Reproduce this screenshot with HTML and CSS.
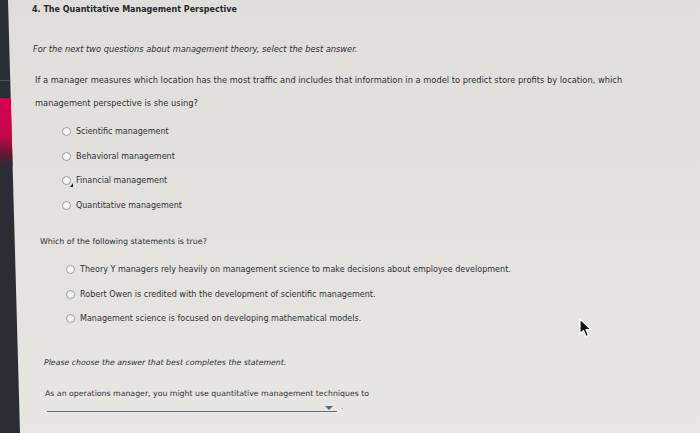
FILE: index.html
```html
<!DOCTYPE html>
<html lang="en">
<head>
    <meta charset="UTF-8">
    <title>The Quantitative Management Perspective</title>
    <link rel="stylesheet" href="styles.css">
</head>
<body>
    <div class="screen">
        <div class="side-bar">
            <div class="side-line"></div>
            <div class="side-pink"></div>
        </div>

        <div class="content">
            <h1 class="title">4. The Quantitative Management Perspective</h1>

            <p class="note note-1">For the next two questions about management theory, select the best answer.</p>

            <p class="question q-1">If a manager measures which location has the most traffic and includes that information in a model to predict store profits by location, which management perspective is she using?</p>

            <div class="options opts-1">
                <label class="option"><span class="radio"></span>Scientific management</label>
                <label class="option"><span class="radio"></span>Behavioral management</label>
                <label class="option"><span class="radio"><span class="pointer-mark"></span></span>Financial management</label>
                <label class="option"><span class="radio"></span>Quantitative management</label>
            </div>

            <p class="question q-2">Which of the following statements is true?</p>

            <div class="options opts-2">
                <label class="option"><span class="radio"></span>Theory Y managers rely heavily on management science to make decisions about employee development.</label>
                <label class="option"><span class="radio"></span>Robert Owen is credited with the development of scientific management.</label>
                <label class="option"><span class="radio"></span>Management science is focused on developing mathematical models.</label>
            </div>

            <p class="note note-2">Please choose the answer that best completes the statement.</p>

            <p class="question q-3">As an operations manager, you might use quantitative management techniques to</p>

            <div class="dropdown-row">
                <div class="dropdown">
                    <span class="caret"></span>
                </div>
                <span class="period">.</span>
            </div>
        </div>

        <!-- mouse pointer -->
        <svg class="cursor" width="14" height="20" viewBox="0 0 14 20">
            <path d="M1 1 L1 16 L4.5 12.5 L7 18.5 L9.5 17.5 L7 11.5 L12 11.5 Z" fill="#111" stroke="#fff" stroke-width="1.2" stroke-linejoin="round"/>
        </svg>
    </div>
</body>
</html>
```

FILE: styles.css
```css
html, body {
    margin: 0;
    padding: 0;
}
body {
    width: 700px;
    height: 433px;
    overflow: hidden;
    font-family: "DejaVu Sans", Verdana, sans-serif;
    color: #2e3034;
    background: linear-gradient(180deg, #dfdedb 0%, #e3e2df 55%, #e7e6e3 100%);
}
.screen {
    position: relative;
    display: flex;
    height: 433px;
}
.side-bar {
    position: relative;
    flex: 0 0 20px;
    height: 433px;
    background: #2a2e34;
    clip-path: polygon(0 0, 8px 0, 20px 100%, 0 100%);
}
.side-line {
    position: absolute;
    top: 80px;
    left: 0;
    width: 20px;
    height: 1px;
    background: #4a4f56;
}
.side-pink {
    position: absolute;
    top: 98px;
    left: 0;
    width: 20px;
    height: 68px;
    background: linear-gradient(180deg, #d4004c 0%, #c8084c 55%, #5a1a30 85%, #2a2e34 100%);
}
.content {
    flex: 1;
}
.title {
    margin: 3px 0 0 12px;
    font-size: 8px;
    line-height: 14px;
    font-weight: bold;
    color: #26282c;
}
p {
    margin: 0;
}
.note {
    font-style: italic;
    line-height: 14px;
}
.note-1 {
    margin: 25px 0 0 13px;
    font-size: 8.25px;
}
.q-1 {
    margin: 12.5px 0 0 15px;
    width: 600px;
    font-size: 8.3px;
    line-height: 23px;
}
.options {
    display: flex;
    flex-direction: column;
}
.option {
    display: flex;
    align-items: center;
    height: 24.5px;
}
.opts-1 {
    margin: 5px 0 0 42px;
    font-size: 8px;
}
.q-2 {
    margin: 17px 0 0 20px;
    font-size: 7.9px;
    line-height: 14px;
}
.opts-2 {
    margin: 8.75px 0 0 46px;
    font-size: 8.05px;
}
.radio {
    position: relative;
    box-sizing: border-box;
    width: 9px;
    height: 9px;
    margin-right: 5px;
    border: 1px solid #9c9ea2;
    border-radius: 50%;
    background: #f4f4f3;
}
.pointer-mark {
    position: absolute;
    right: -3px;
    bottom: -3px;
    width: 0;
    height: 0;
    border-left: 3px solid transparent;
    border-bottom: 4px solid #1a1a1a;
}
.note-2 {
    margin: 24.75px 0 0 24px;
    font-size: 7.8px;
}
.q-3 {
    margin: 17px 0 0 25px;
    font-size: 7.8px;
    line-height: 14px;
}
.dropdown-row {
    display: flex;
    align-items: flex-end;
    margin: 0 0 0 27px;
}
.dropdown {
    position: relative;
    width: 290px;
    height: 10px;
    border-bottom: 1.5px solid #5b7086;
}
.caret {
    position: absolute;
    right: 4px;
    top: 5px;
    width: 0;
    height: 0;
    border-left: 4px solid transparent;
    border-right: 4px solid transparent;
    border-top: 4px solid #4d6a8c;
}
.period {
    margin-left: 4px;
    font-size: 8px;
    line-height: 10px;
    color: #777;
}
.cursor {
    position: absolute;
    left: 579px;
    top: 318px;
}
```
